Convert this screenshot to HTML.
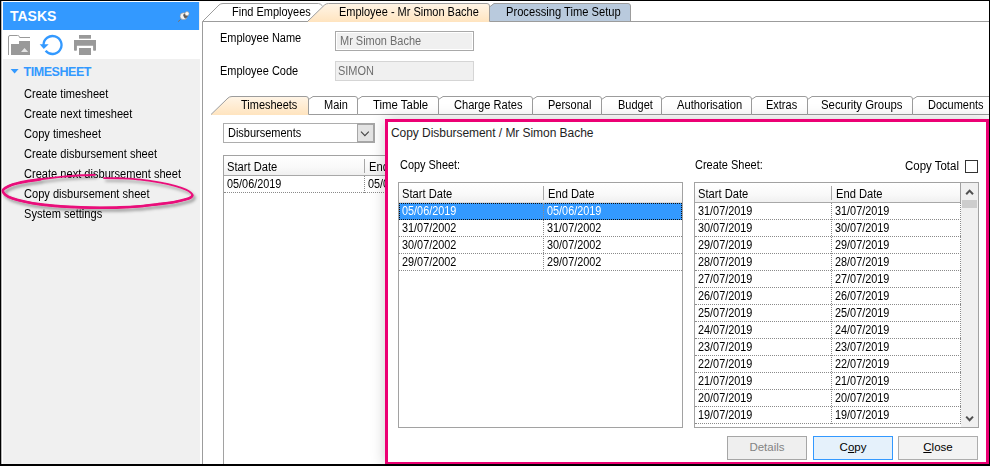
<!DOCTYPE html>
<html>
<head>
<meta charset="utf-8">
<title>Copy Disbursement</title>
<style>
html,body{margin:0;padding:0;}
body{width:990px;height:466px;overflow:hidden;background:#000;position:relative;font-family:"Liberation Sans",sans-serif;font-size:12px;color:#000;}
#app{position:absolute;left:1px;top:1px;width:988px;height:463px;background:#fff;overflow:hidden;}
.abs{position:absolute;}
.t{position:absolute;white-space:nowrap;line-height:14px;height:14px;transform:scaleX(var(--s,.915));transform-origin:0 50%;}
/* left panel */
#lp{position:absolute;left:1px;top:1px;width:198px;height:462px;background:#f0f0f0;}
#lph{position:absolute;left:1px;top:0;width:196px;height:28px;background:#3399ff;}
#lpt{position:absolute;left:0;top:28px;width:198px;height:29px;background:#fff;}
.mi{left:22px;--s:.923;}
.dt{--s:.905;}
/* dialog lists */
.lb{position:absolute;border:1px solid #a2a2a2;background:#fff;overflow:hidden;}
.hd{position:absolute;left:0;top:0;height:19px;border-bottom:1px solid #a8a8a8;background:linear-gradient(#ffffff,#f9f9f9 60%,#f0f0f0);}
.hs{position:absolute;top:3px;width:1px;height:14px;background:#a8a8a8;}
.row{position:absolute;left:0;height:16px;border-bottom:1px dotted #8a8a8a;}
.vd{position:absolute;width:0;border-left:1px dotted #8a8a8a;}
.btn{position:absolute;top:435px;width:78px;height:22px;border:1px solid #adadad;background:#e1e1e1;text-align:center;line-height:21px;font-size:11.5px;}
u{text-decoration:underline;}
</style>
</head>
<body>
<div id="app">

<!-- LEFT PANEL -->
<div id="lp">
  <div id="lph">
    <div class="t" style="left:7px;top:6px;font-size:14px;font-weight:bold;color:#fff;line-height:16px;height:16px;--s:1;">TASKS</div>
    <svg class="abs" style="left:172px;top:6px" width="18" height="16" viewBox="0 0 18 16">
      <line x1="3.1" y1="13.7" x2="5.6" y2="11.4" stroke="#8a6a4a" stroke-width="0.9"/>
      <ellipse cx="8.6" cy="8.2" rx="3.5" ry="3.4" fill="#f4f4f4" stroke="#9a8a7a" stroke-width="0.5"/>
      <path d="M9.200 5.200 A3.300 3.300 0 0 0 11.700 10.600 A4.200 4.200 0 0 1 9.200 5.200 Z" fill="#4a4a4a"/>
      <ellipse cx="10.6" cy="7.700" rx="1.800" ry="2.300" fill="#5a5a5a" transform="rotate(-35 10.6 7.700)"/>
      <circle cx="12" cy="5.700" r="2.100" fill="#fafafa" stroke="#a08a70" stroke-width="0.5"/>
    </svg>
  </div>
  <div id="lpt">
    <!-- folder -->
    <svg class="abs" style="left:5px;top:4px" width="26" height="24" viewBox="0 0 26 24">
      <path d="M1.5 21 V3 Q1.5 1.5 3 1.5 H10.5 Q12 1.5 12.3 2.6 L12.6 3.5 H23" fill="none" stroke="#999" stroke-width="1"/>
      <path d="M4 21 V10 H12 V7 H23 V21 Z" fill="#999"/>
      <path d="M14 18 L17.5 14 L21.2 18 Z" fill="#e6e6e6"/>
    </svg>
    <!-- refresh -->
    <svg class="abs" style="left:37px;top:4px" width="28" height="24" viewBox="0 0 28 24">
      <path d="M4.5 11 A9 9 0 1 1 6.600 16.800" fill="none" stroke="#3399ff" stroke-width="2.3"/>
      <path d="M0.700 10.200 L9.700 10.200 L4.800 15 Z" fill="#3399ff"/>
    </svg>
    <!-- printer -->
    <svg class="abs" style="left:71px;top:3px" width="26" height="24" viewBox="0 0 26 24">
      <rect x="6" y="2" width="12" height="3.7" fill="#999"/>
      <path d="M1 7 H23 V17 Q23 17.7 22.3 17.7 H20.8 Q20.1 17.7 20.1 17 V12.7 H3.9 V17 Q3.9 17.7 3.2 17.7 H1.7 Q1 17.7 1 17 Z" fill="#999"/>
      <rect x="6" y="15" width="12" height="7" fill="#999"/>
    </svg>
  </div>
  <svg class="abs" style="left:8px;top:66px" width="10" height="6" viewBox="0 0 10 6"><path d="M0.6 1 H8.6 L4.6 5.4 Z" fill="#3399ff"/></svg>
  <div class="t" style="left:21.5px;top:62px;font-size:12.5px;font-weight:bold;color:#3399ff;letter-spacing:-0.45px;line-height:16px;height:16px;--s:1;">TIMESHEET</div>
  <div class="t mi" style="top:85px;">Create timesheet</div>
  <div class="t mi" style="top:105px;">Create next timesheet</div>
  <div class="t mi" style="top:125px;">Copy timesheet</div>
  <div class="t mi" style="top:145px;">Create disbursement sheet</div>
  <div class="t mi" style="top:165px;">Create next disbursement sheet</div>
  <div class="t mi" style="top:185px;">Copy disbursement sheet</div>
  <div class="t mi" style="top:205px;">System settings</div>
</div>

<!-- MAIN AREA -->
<div id="main" class="abs" style="left:0;top:0;width:988px;height:463px;">
  <!-- outer tabs drawn with svg -->
  <svg class="abs" style="left:198px;top:0" width="790" height="24" viewBox="199 1 790 24">
    <defs>
      <linearGradient id="pg" x1="0" y1="0" x2="0" y2="1"><stop offset="0" stop-color="#fff5e7"/><stop offset="1" stop-color="#ffe4bf"/></linearGradient>
    </defs>
    <path d="M202.5 21.5 L219 5 Q220.5 3.5 223 3.5 H318.5 Q320.5 3.5 322.5 6" fill="none" stroke="#9c9c9c" stroke-width="1"/>
    <path d="M489.5 21.5 V7 L494 3.500 H628 Q630.500 3.500 630.500 6 V21.500 Z" fill="#b9cadd" stroke="#9c9c9c" stroke-width="1"/>
    <path d="M202.5 25 V21.5 H308" fill="none" stroke="#9c9c9c" stroke-width="1"/>
    <path d="M489.5 21.5 H989" fill="none" stroke="#9c9c9c" stroke-width="1"/>
    <path d="M307.5 22 L324.5 5 Q326 3.5 328.5 3.5 H487 Q489.500 3.500 489.500 6 V22 Z" fill="url(#pg)"/>
    <path d="M307.5 21.5 L324.5 5 Q326 3.5 328.5 3.5 H487 Q489.500 3.500 489.500 6 V21.5" fill="none" stroke="#9c9c9c" stroke-width="1"/>
  </svg>
  <div class="t" style="left:230.5px;top:4px;">Find Employees</div>
  <div class="t" style="left:337.5px;top:4px;">Employee - Mr Simon Bache</div>
  <div class="t" style="left:504.5px;top:4px;--s:0.93;">Processing Time Setup</div>

  <div class="t" style="left:219px;top:30px;">Employee Name</div>
  <div class="t" style="left:219px;top:63px;">Employee Code</div>
  <div class="abs" style="left:334px;top:30px;width:137px;height:18px;border:1px solid #a9a9a9;background:#f0f0f0;box-shadow:inset 0 0 0 1px #fff;"></div>
  <div class="t" style="left:339px;top:33px;color:#6d6d6d;">Mr Simon Bache</div>
  <div class="abs" style="left:334px;top:60px;width:137px;height:18px;border:1px solid #d5d5d5;background:#f0f0f0;"></div>
  <div class="t" style="left:336.5px;top:63px;color:#6d6d6d;">SIMON</div>

  <!-- inner tabs -->
  <svg class="abs" style="left:198px;top:90px" width="790" height="30" viewBox="199 91 790 30">
    <g stroke="#9c9c9c" stroke-width="1" fill="#fff">
      <path d="M912.5 114.5 V99.5 L917 96.5 H990 V114.5 Z"/>
      <path d="M807.5 114.5 V99.5 L812 96.5 H910 Q912.5 96.5 912.5 99 V114.5 Z"/>
      <path d="M751.5 114.5 V99.5 L756 96.5 H805 Q807.5 96.5 807.5 99 V114.5 Z"/>
      <path d="M661.5 114.5 V99.5 L666 96.5 H749 Q751.5 96.5 751.5 99 V114.5 Z"/>
      <path d="M601.5 114.5 V99.5 L606 96.5 H659 Q661.5 96.5 661.5 99 V114.5 Z"/>
      <path d="M532.5 114.5 V99.5 L537 96.5 H599 Q601.5 96.5 601.5 99 V114.5 Z"/>
      <path d="M438.5 114.5 V99.5 L443 96.5 H530 Q532.5 96.5 532.5 99 V114.5 Z"/>
      <path d="M357.5 114.5 V99.5 L362 96.5 H436 Q438.5 96.5 438.5 99 V114.5 Z"/>
      <path d="M308.5 114.5 V99.5 L313 96.5 H355 Q357.5 96.5 357.5 99 V114.5 Z"/>
    </g>
    <path d="M211 115 L228 98 Q229.5 96.500 232 96.500 H306 Q308.500 96.500 308.500 99 V115 Z" fill="url(#pg)"/>
    <path d="M211 114.500 L228 98 Q229.5 96.500 232 96.500 H306 Q308.500 96.500 308.500 99 V114.500" fill="none" stroke="#9c9c9c" stroke-width="1"/>
  </svg>
  <div class="t" style="left:239.5px;top:97px;">Timesheets</div>
  <div class="t" style="left:322.5px;top:97px;">Main</div>
  <div class="t" style="left:372px;top:97px;--s:0.95;">Time Table</div>
  <div class="t" style="left:453px;top:97px;--s:0.925;">Charge Rates</div>
  <div class="t" style="left:546.5px;top:97px;">Personal</div>
  <div class="t" style="left:616.5px;top:97px;">Budget</div>
  <div class="t" style="left:676px;top:97px;--s:0.93;">Authorisation</div>
  <div class="t" style="left:764.5px;top:97px;">Extras</div>
  <div class="t" style="left:820px;top:97px;--s:0.947;">Security Groups</div>
  <div class="t" style="left:926.5px;top:97px;">Documents</div>

  <!-- combo -->
  <div class="abs" style="left:222px;top:122px;width:150px;height:18px;border:1px solid #adadad;background:#fff;"></div>
  <div class="t" style="left:226.5px;top:125px;">Disbursements</div>
  <div class="abs" style="left:356px;top:122px;width:15px;height:16px;border:solid #a6a6a6;border-width:2px 2px 2px 1px;background:#e3e3e3;"></div>
  <svg class="abs" style="left:359px;top:129px" width="10" height="8" viewBox="0 0 10 8"><path d="M1 1.600 L4.900 5.600 L8.800 1.600" fill="none" stroke="#444" stroke-width="1.1"/></svg>

  <!-- background grid -->
  <div class="abs" style="left:222px;top:154px;width:400px;height:320px;border:1px solid #a2a2a2;background:#fff;">
    <div class="hd" style="width:400px;"></div>
    <div class="hs" style="left:140px;"></div>
    <div class="t" style="left:3px;top:3.5px;--s:.93;">Start Date</div>
    <div class="t" style="left:145px;top:3.5px;--s:.93;">End Date</div>
    <div class="row" style="top:20px;width:400px;"></div>
    <div class="vd" style="left:140px;top:20px;height:17px;"></div>
    <div class="t dt" style="left:3px;top:20.5px;">05/06/2019</div>
    <div class="t dt" style="left:144px;top:20.5px;">05/06/2019</div>
  </div>
  <div class="abs" style="left:201px;top:21px;width:1px;height:442px;background:#9c9c9c;"></div>
</div>

<!-- DIALOG -->
<div id="dlg" class="abs" style="left:384px;top:118px;width:598px;height:340px;border:3px solid #ec0074;background:#fff;box-shadow:0 0 14px rgba(0,0,0,0.2);font-size:12px;">
</div>
<div id="dlgc" class="abs" style="left:0;top:0;width:988px;height:463px;">
  <div class="t" style="left:390px;top:124px;font-size:12px;line-height:16px;height:16px;letter-spacing:-0.05px;color:#1e1e1e;--s:1;">Copy Disbursement / Mr Simon Bache</div>
  <div class="t" style="left:398.5px;top:157px;--s:.91;">Copy Sheet:</div>
  <div class="t" style="left:694px;top:157px;">Create Sheet:</div>
  <div class="t" style="left:903.5px;top:157.5px;--s:.955;">Copy Total</div>
  <div class="abs" style="left:964px;top:159px;width:11px;height:11px;border:1px solid #333;background:#fff;"></div>

  <!-- left list -->
  <div class="lb" style="left:397px;top:181px;width:283px;height:244px;">
    <div class="hd" style="width:283px;border-bottom-color:#d9d9d9;"></div>
    <div class="hs" style="left:144px;"></div>
    <div class="t" style="left:3px;top:3.5px;--s:.93;">Start Date</div>
    <div class="t" style="left:149px;top:3.5px;--s:.93;">End Date</div>
    <div class="abs" style="left:0;top:20px;width:283px;height:17px;background:#3399ff;"></div>
    <div class="abs" style="left:0;top:20px;width:281px;height:15px;border:1px dotted #111;"></div>
    <div class="row" style="top:37px;width:283px;"></div>
    <div class="row" style="top:54px;width:283px;"></div>
    <div class="row" style="top:71px;width:283px;"></div>
    <div class="vd" style="left:144px;top:20px;height:68px;"></div>
    <div class="t dt" style="left:3px;top:20.5px;color:#fff;">05/06/2019</div><div class="t dt" style="left:148px;top:20.5px;color:#fff;">05/06/2019</div>
    <div class="t dt" style="left:3px;top:37.5px;">31/07/2002</div><div class="t dt" style="left:148px;top:37.5px;">31/07/2002</div>
    <div class="t dt" style="left:3px;top:54.5px;">30/07/2002</div><div class="t dt" style="left:148px;top:54.5px;">30/07/2002</div>
    <div class="t dt" style="left:3px;top:71.5px;">29/07/2002</div><div class="t dt" style="left:148px;top:71.5px;">29/07/2002</div>
  </div>

  <!-- right list -->
  <div class="lb" id="rl" style="left:693px;top:181px;width:283px;height:244px;">
    <div class="hd" style="width:265px;border-right:1px solid #a0a0a0;"></div>
    <div class="hs" style="left:136px;"></div>
    <div class="t" style="left:3px;top:3.5px;--s:.93;">Start Date</div>
    <div class="t" style="left:141px;top:3.5px;--s:.93;">End Date</div>
    <div class="abs" style="left:266px;top:0;width:17px;height:244px;background:#f0f0f0;"></div>
    <div class="abs" style="left:267px;top:17px;width:15px;height:8px;background:#cdcdcd;"></div>
    <svg class="abs" style="left:268px;top:2px" width="14" height="12" viewBox="0 0 14 12"><path d="M3.2 9.2 L6.6 5.6 L10 9.2" fill="none" stroke="#505050" stroke-width="2"/></svg>
    <svg class="abs" style="left:268px;top:229px" width="14" height="12" viewBox="0 0 14 12"><path d="M3.2 4.600 L6.6 8.200 L10 4.600" fill="none" stroke="#505050" stroke-width="2"/></svg>
    <div class="vd" style="left:136px;top:20px;height:221px;"></div>
    <div class="vd" style="left:265px;top:20px;height:221px;"></div>
    <div class="row" style="top:20px;width:266px;"></div><div class="t dt" style="left:3px;top:20.5px;">31/07/2019</div><div class="t dt" style="left:140px;top:20.5px;">31/07/2019</div>
    <div class="row" style="top:37px;width:266px;"></div><div class="t dt" style="left:3px;top:37.5px;">30/07/2019</div><div class="t dt" style="left:140px;top:37.5px;">30/07/2019</div>
    <div class="row" style="top:54px;width:266px;"></div><div class="t dt" style="left:3px;top:54.5px;">29/07/2019</div><div class="t dt" style="left:140px;top:54.5px;">29/07/2019</div>
    <div class="row" style="top:71px;width:266px;"></div><div class="t dt" style="left:3px;top:71.5px;">28/07/2019</div><div class="t dt" style="left:140px;top:71.5px;">28/07/2019</div>
    <div class="row" style="top:88px;width:266px;"></div><div class="t dt" style="left:3px;top:88.5px;">27/07/2019</div><div class="t dt" style="left:140px;top:88.5px;">27/07/2019</div>
    <div class="row" style="top:105px;width:266px;"></div><div class="t dt" style="left:3px;top:105.5px;">26/07/2019</div><div class="t dt" style="left:140px;top:105.5px;">26/07/2019</div>
    <div class="row" style="top:122px;width:266px;"></div><div class="t dt" style="left:3px;top:122.5px;">25/07/2019</div><div class="t dt" style="left:140px;top:122.5px;">25/07/2019</div>
    <div class="row" style="top:139px;width:266px;"></div><div class="t dt" style="left:3px;top:139.5px;">24/07/2019</div><div class="t dt" style="left:140px;top:139.5px;">24/07/2019</div>
    <div class="row" style="top:156px;width:266px;"></div><div class="t dt" style="left:3px;top:156.5px;">23/07/2019</div><div class="t dt" style="left:140px;top:156.5px;">23/07/2019</div>
    <div class="row" style="top:173px;width:266px;"></div><div class="t dt" style="left:3px;top:173.5px;">22/07/2019</div><div class="t dt" style="left:140px;top:173.5px;">22/07/2019</div>
    <div class="row" style="top:190px;width:266px;"></div><div class="t dt" style="left:3px;top:190.5px;">21/07/2019</div><div class="t dt" style="left:140px;top:190.5px;">21/07/2019</div>
    <div class="row" style="top:207px;width:266px;"></div><div class="t dt" style="left:3px;top:207.5px;">20/07/2019</div><div class="t dt" style="left:140px;top:207.5px;">20/07/2019</div>
    <div class="row" style="top:224px;width:266px;"></div><div class="t dt" style="left:3px;top:224.5px;">19/07/2019</div><div class="t dt" style="left:140px;top:224.5px;">19/07/2019</div>
  </div>

  <!-- buttons -->
  <div class="btn" style="left:726px;color:#838383;background:#efefef;border-color:#a6a6a6;">Details</div>
  <div class="btn" style="left:812px;border-color:#3399ff;background:#e5f1fb;">C<u>o</u>py</div>
  <div class="btn" style="left:897px;background:#f3f3f3;border-color:#adadad;"><u>C</u>lose</div>
</div>

<div class="abs" style="left:0;top:0;width:1px;height:463px;background:#b4b4b4;"></div>
<div class="abs" style="left:1px;top:1px;width:1px;height:462px;background:#fff;"></div>
<!-- pink ellipse annotation -->
<svg class="abs" style="left:0;top:165px" width="200" height="52" viewBox="1 166 200 52">
  <defs><filter id="sh" x="-5%" y="-30%" width="112%" height="170%"><feDropShadow dx="2" dy="2.5" stdDeviation="1.4" flood-color="#000" flood-opacity="0.4"/></filter></defs>
  <g filter="url(#sh)" fill="none" stroke="#e9107a" stroke-linecap="round">
    <path d="M94.9 174.9 C92.6 175.0 86.5 175.0 80.8 175.3 C75.1 175.6 67.3 176.2 60.6 176.9 C53.9 177.6 46.3 178.5 40.4 179.3 C34.5 180.1 30.0 180.7 25.3 181.6 C20.6 182.5 15.5 183.6 12.1 184.7 C8.7 185.8 6.5 187.2 5.0 188.2 C3.5 189.2 2.8 189.6 2.8 190.7 C2.8 191.8 3.5 193.2 5.0 194.5 C6.5 195.8 8.7 197.1 12.1 198.3 C15.5 199.5 20.6 200.8 25.3 201.8 C30.0 202.8 34.5 203.6 40.4 204.4 C46.3 205.2 53.9 205.9 60.6 206.4 C67.3 206.9 74.2 207.2 80.8 207.4 C87.4 207.6 93.4 207.7 100.0 207.7 C106.6 207.7 113.5 207.7 120.2 207.4 C126.9 207.2 133.7 206.8 140.4 206.2 C147.1 205.6 154.7 204.6 160.6 203.9 C166.5 203.2 171.6 202.6 175.8 201.8 C180.0 201.0 183.4 200.1 185.9 199.3 C188.4 198.6 189.8 198.0 190.9 197.3 C192.0 196.6 192.4 196.1 192.4 195.3 C192.4 194.5 192.0 193.6 190.9 192.7 C189.8 191.8 188.4 190.8 185.9 189.7 C183.4 188.6 180.0 187.4 175.8 186.2 C171.6 185.0 166.5 183.7 160.6 182.6 C154.7 181.5 147.1 180.3 140.4 179.6 C133.7 178.9 126.3 178.6 120.2 178.3 C114.1 178.1 106.7 178.1 104.0 178.1" stroke-width="1.9"/>
    <path d="M40.4 179.3 C34.5 180.1 30.0 180.7 25.3 181.6 C20.6 182.5 15.5 183.6 12.1 184.7 C8.7 185.8 6.5 187.2 5.0 188.2 C3.5 189.2 2.8 189.6 2.8 190.7 C2.8 191.8 3.5 193.2 5.0 194.5 C6.5 195.8 8.7 197.1 12.1 198.3 C15.5 199.5 20.6 200.8 25.3 201.8 C30.0 202.8 34.5 203.6 40.4 204.4 C46.3 205.2 53.9 205.9 60.6 206.4 C67.3 206.9 74.2 207.2 80.8 207.4 C87.4 207.6 93.4 207.7 100.0 207.7 C106.6 207.7 113.5 207.7 120.2 207.4 C126.9 207.2 133.7 206.8 140.4 206.2 C147.1 205.6 154.7 204.6 160.6 203.9 C166.5 203.2 171.6 202.6 175.8 201.8 C180.0 201.0 183.4 200.1 185.9 199.3 C188.4 198.6 189.8 198.0 190.9 197.3 C192.0 196.6 192.4 196.1 192.4 195.3" stroke-width="2.6"/>
  </g>
</svg>

</div>
</body>
</html>
